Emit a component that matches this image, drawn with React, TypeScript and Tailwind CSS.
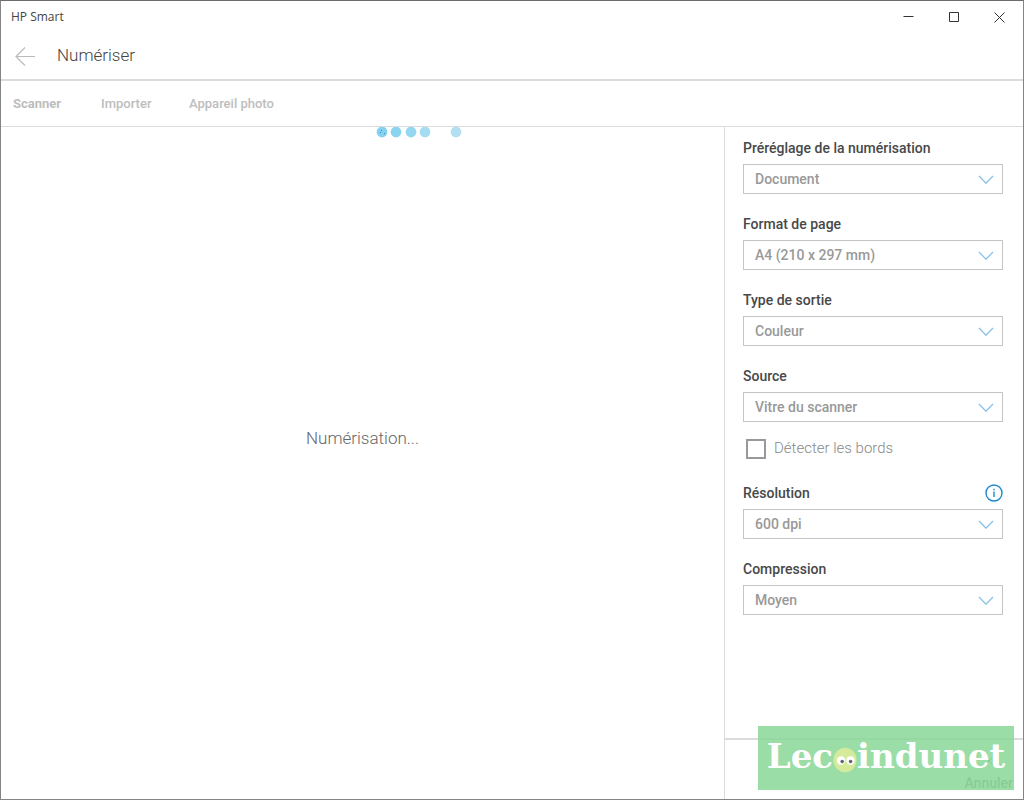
import type { ReactNode } from 'react'

interface SelectFieldProps {
  id: string
  label: string
  value: string
  aside?: ReactNode
}

const tabs = [
  { label: 'Scanner', className: 'w-[88px] font-bold' },
  { label: 'Importer', className: 'w-[88px] font-medium' },
  { label: 'Appareil photo', className: 'font-medium' },
]

const dots = [
  { cx: 6, color: '#85d1ef' },
  { cx: 20, color: '#8bd4ef' },
  { cx: 35, color: '#95d7f0' },
  { cx: 49, color: '#a6dcf1' },
  { cx: 80, color: '#b2dff2' },
]

const SelectField = ({ id, label, value, aside }: SelectFieldProps) => (
  <div className="flex flex-col gap-1.5">
    <div className="flex h-5 items-center justify-between">
      <label htmlFor={id} className="text-sm font-medium text-[#484848]">
        {label}
      </label>
      {aside}
    </div>
    <div className="relative">
      <select
        id={id}
        className="block h-[30px] w-full appearance-none border border-[#c4c4c4] bg-white pr-8 pl-[11px] text-sm font-medium text-[#999]"
      >
        <option>{value}</option>
      </select>
      <svg
        className="pointer-events-none absolute top-[11px] right-[9px] h-[9px] w-4"
        viewBox="0 0 16 9"
        fill="none"
        stroke="#7fc0e6"
        strokeWidth="1.2"
      >
        <path d="M1 1 8 8.2 15 1" />
      </svg>
    </div>
  </div>
)

const InfoButton = () => (
  <button type="button" aria-label="Informations sur la résolution">
    <svg className="h-[18px] w-[18px]" viewBox="0 0 18 18" fill="none" stroke="#1c8acb" strokeWidth="1.4">
      <circle cx="9" cy="9" r="8" />
      <path d="M9 7.5v5.5M9 4.8v1.5" />
    </svg>
  </button>
)

const TitleBar = () => (
  <div className="flex h-8 items-center justify-between pr-px pl-2.5">
    <span className="font-['Open_Sans',sans-serif] text-xs text-[#444]">HP Smart</span>
    <div className="flex">
      <button type="button" aria-label="Réduire" className="flex h-8 w-[45px] items-center justify-center">
        <svg className="h-[11px] w-[11px]" viewBox="0 0 11 11" stroke="#333">
          <path d="M.5 4.5h10" />
        </svg>
      </button>
      <button type="button" aria-label="Agrandir" className="flex h-8 w-[46px] items-center justify-center">
        <svg className="h-[11px] w-[11px]" viewBox="0 0 11 11" fill="none" stroke="#333">
          <path d="M.5.5h9v9h-9z" />
        </svg>
      </button>
      <button type="button" aria-label="Fermer" className="flex h-8 w-[45px] items-center justify-center">
        <svg className="h-[11px] w-[11px]" viewBox="0 0 11 11" stroke="#333">
          <path d="m.5.5 10 10m0-10-10 10" />
        </svg>
      </button>
    </div>
  </div>
)

const Watermark = () => (
  <div className="absolute right-[9px] bottom-[9px] flex h-16 w-64 items-center justify-center bg-[rgb(137,215,151)]/85 pb-1 font-['DejaVu_Serif',serif] text-[34px] leading-none font-bold text-white">
    <span>Lec</span>
    <svg className="mt-2 h-[26px] w-6" viewBox="0 0 24 26">
      <ellipse cx="12" cy="13" rx="11.5" ry="12.2" fill="#d3eb9b" />
      <circle cx="8" cy="13.5" r="4.2" fill="#fff" />
      <circle cx="17.5" cy="13.5" r="4.2" fill="#fff" />
      <circle cx="9.2" cy="14.5" r="1.8" fill="#666" />
      <circle cx="17.6" cy="14.5" r="1.8" fill="#666" />
    </svg>
    <span>indunet</span>
  </div>
)

export default function App() {
  return (
    <div className="relative flex min-h-screen flex-col border border-[#858585] border-t-[#6b6b6b] bg-white font-[Roboto,sans-serif]">
      <TitleBar />
      <header className="flex h-12 items-center gap-[22px] border-b-2 border-[#dcdcdc] pl-3.5">
        <button type="button" aria-label="Retour">
          <svg className="h-5 w-5" viewBox="0 0 20 20" fill="none" stroke="#bbb" strokeWidth="1.2">
            <path d="M20 10.5H1M10 1.5l-9 9 9 9" />
          </svg>
        </button>
        <h1 className="text-[17px] font-light text-[#444]">Numériser</h1>
      </header>
      <nav className="flex h-[46px] items-center border-b border-[#dcdcdc] pl-3 text-[13px] text-[#bdbdbd]">
        {tabs.map((tab) => (
          <button key={tab.label} type="button" className={`text-left ${tab.className}`}>
            {tab.label}
          </button>
        ))}
      </nav>
      <div className="flex flex-1">
        <main className="flex flex-1 flex-col">
          <svg className="ml-[375px] h-[11px] w-[88px]" viewBox="0 0 88 11">
            {dots.map((dot) => (
              <circle key={dot.cx} cx={dot.cx} cy="5" r="5.4" fill={dot.color} />
            ))}
            <path d="M5 3h1v1H5zM4 5h1v1H4zM8 6h1v1H8z" fill="#2a8fc4" />
          </svg>
          <div className="flex flex-1 items-start justify-center pt-72">
            <p className="text-[17px] leading-6 font-light text-[#666]">Numérisation...</p>
          </div>
        </main>
        <aside className="flex w-[299px] flex-col border-l border-[#dcdcdc]">
          <form className="flex-1 pt-[11px] pr-5 pl-[18px]">
            <div className="flex flex-col gap-5">
              <SelectField id="preset" label="Préréglage de la numérisation" value="Document" />
              <SelectField id="page-format" label="Format de page" value="A4 (210 x 297 mm)" />
              <SelectField id="output" label="Type de sortie" value="Couleur" />
              <SelectField id="source" label="Source" value="Vitre du scanner" />
            </div>
            <label className="flex items-center gap-2 pt-4 pr-3 pb-6 pl-[3px] text-[15px] leading-[21px] font-light text-[#888]">
              <input type="checkbox" className="h-5 w-5 appearance-none border-2 border-[#999] bg-white" />
              Détecter les bords
            </label>
            <div className="flex flex-col gap-5">
              <SelectField id="resolution" label="Résolution" value="600 dpi" aside={<InfoButton />} />
              <SelectField id="compression" label="Compression" value="Moyen" />
            </div>
          </form>
          <footer className="flex h-[61px] items-end justify-end border-t-2 border-[#dcdcdc] pr-2.5 pb-2">
            <button type="button" className="flex flex-col items-center gap-2 text-sm leading-4 font-medium text-[#888]">
              <svg className="h-3 w-3" viewBox="0 0 12 12" stroke="#888">
                <path d="m1 1 10 10M11 1 1 11" />
              </svg>
              Annuler
            </button>
          </footer>
        </aside>
      </div>
      <Watermark />
    </div>
  )
}
